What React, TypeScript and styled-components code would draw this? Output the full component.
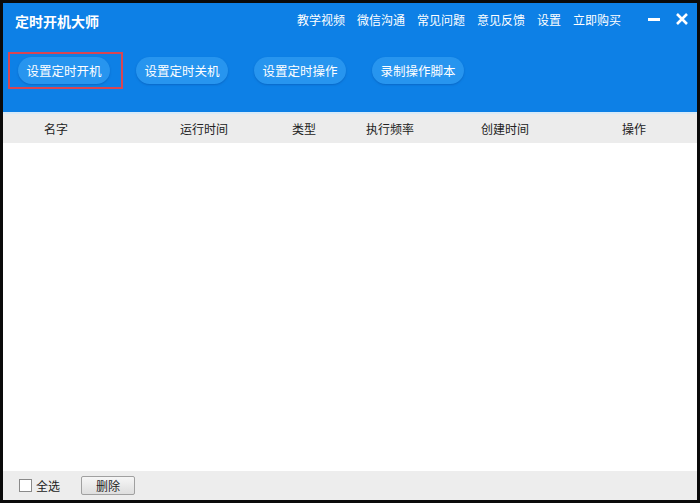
import React from 'react';
import styled, { createGlobalStyle } from 'styled-components';

const GlobalStyle = createGlobalStyle`
  html, body {
    margin: 0;
    padding: 0;
    background: #0a0a0a;
  }
  body {
    font-family: "Noto Sans CJK SC", "Noto Sans", sans-serif;
  }
`;

const Frame = styled.div`
  width: 700px;
  height: 503px;
  padding: 3px;
  box-sizing: border-box;
  background: #0a0a0a;
`;

const Window = styled.div`
  width: 694px;
  height: 497px;
  display: flex;
  flex-direction: column;
  background: #ffffff;
  overflow: hidden;
`;

const Header = styled.div`
  background: #0d80e6;
  height: 109px;
  display: flex;
  flex-direction: column;
`;

const TitleBar = styled.div`
  height: 32px;
  display: flex;
  align-items: center;
  padding: 0 0 0 12px;
`;

const AppTitle = styled.div`
  color: #ffffff;
  font-size: 14px;
  font-weight: 700;
  flex: 1;
  padding-top: 4px;
`;

const Nav = styled.nav`
  display: flex;
  align-items: center;
  gap: 12px;
  margin-right: 26px;
`;

const NavLink = styled.span`
  color: #ffffff;
  font-size: 12px;
  white-space: nowrap;
`;

const WinButtons = styled.div`
  display: flex;
  align-items: center;
  gap: 14px;
  margin-right: 8px;
`;

const WinButton = styled.svg`
  width: 14px;
  height: 14px;
  display: block;
`;

const Toolbar = styled.div`
  display: flex;
  align-items: center;
  gap: 26px;
  padding: 22px 0 0 15px;
`;

const ToolButtonWrap = styled.div<{ $active?: boolean }>`
  border: ${(p) => (p.$active ? '2px solid #d84552' : 'none')};
  padding: ${(p) => (p.$active ? '3px 11px 3px 8px' : '0')};
  margin: ${(p) => (p.$active ? '-5px -13px -5px -10px' : '0')};
`;

const ToolButton = styled.button`
  display: block;
  width: 92px;
  height: 27px;
  border: none;
  border-radius: 14px;
  background: #2795ef;
  box-shadow: 0 1px 2px rgba(0, 60, 140, 0.35);
  color: #ffffff;
  font-family: inherit;
  font-size: 12.5px;
  padding: 0;
  cursor: pointer;
`;

const TableHead = styled.div`
  display: grid;
  grid-template-columns: 136px 112px 74px 115px 141px 1fr;
  align-items: center;
  height: 29px;
  padding-left: 41px;
  background: #ececec;
  border-top: 2px solid #d8eaf8;
  color: #222;
  font-size: 12px;
`;

const HeadCell = styled.div`
  white-space: nowrap;
`;

const Body = styled.div`
  flex: 1;
  background: #ffffff;
`;

const Footer = styled.div`
  height: 29px;
  background: #ededed;
  display: flex;
  align-items: center;
  padding-left: 16px;
  font-size: 12px;
  color: #222;
`;

const CheckLabel = styled.label`
  display: flex;
  align-items: center;
  gap: 4px;
`;

const CheckBox = styled.span`
  width: 11px;
  height: 11px;
  border: 1px solid #8a8a8a;
  background: #fff;
  display: inline-block;
`;

const DeleteButton = styled.button`
  margin-left: 21px;
  width: 54px;
  height: 19px;
  border: 1px solid #a0a0a0;
  border-radius: 2px;
  background: linear-gradient(#f6f6f6, #dedede);
  font-family: inherit;
  font-size: 12px;
  color: #222;
  padding: 0;
`;

const navItems = ['教学视频', '微信沟通', '常见问题', '意见反馈', '设置', '立即购买'];
const tools = ['设置定时开机', '设置定时关机', '设置定时操作', '录制操作脚本'];
const columns = ['名字', '运行时间', '类型', '执行频率', '创建时间', '操作'];

export default function App() {
  return (
    <Frame>
      <GlobalStyle />
      <Window>
        <Header>
          <TitleBar>
            <AppTitle>定时开机大师</AppTitle>
            <Nav>
              {navItems.map((n) => (
                <NavLink key={n}>{n}</NavLink>
              ))}
            </Nav>
            <WinButtons>
              <WinButton viewBox="0 0 14 14">
                <rect x="1" y="6" width="12" height="3" fill="#fff" />
              </WinButton>
              <WinButton viewBox="0 0 14 14">
                <path d="M2 2 L12 12 M12 2 L2 12" stroke="#fff" strokeWidth="2.6" />
              </WinButton>
            </WinButtons>
          </TitleBar>
          <Toolbar>
            {tools.map((t, i) => (
              <ToolButtonWrap key={t} $active={i === 0}>
                <ToolButton>{t}</ToolButton>
              </ToolButtonWrap>
            ))}
          </Toolbar>
        </Header>
        <TableHead>
          {columns.map((c) => (
            <HeadCell key={c}>{c}</HeadCell>
          ))}
        </TableHead>
        <Body />
        <Footer>
          <CheckLabel>
            <CheckBox />
            全选
          </CheckLabel>
          <DeleteButton>删除</DeleteButton>
        </Footer>
      </Window>
    </Frame>
  );
}
